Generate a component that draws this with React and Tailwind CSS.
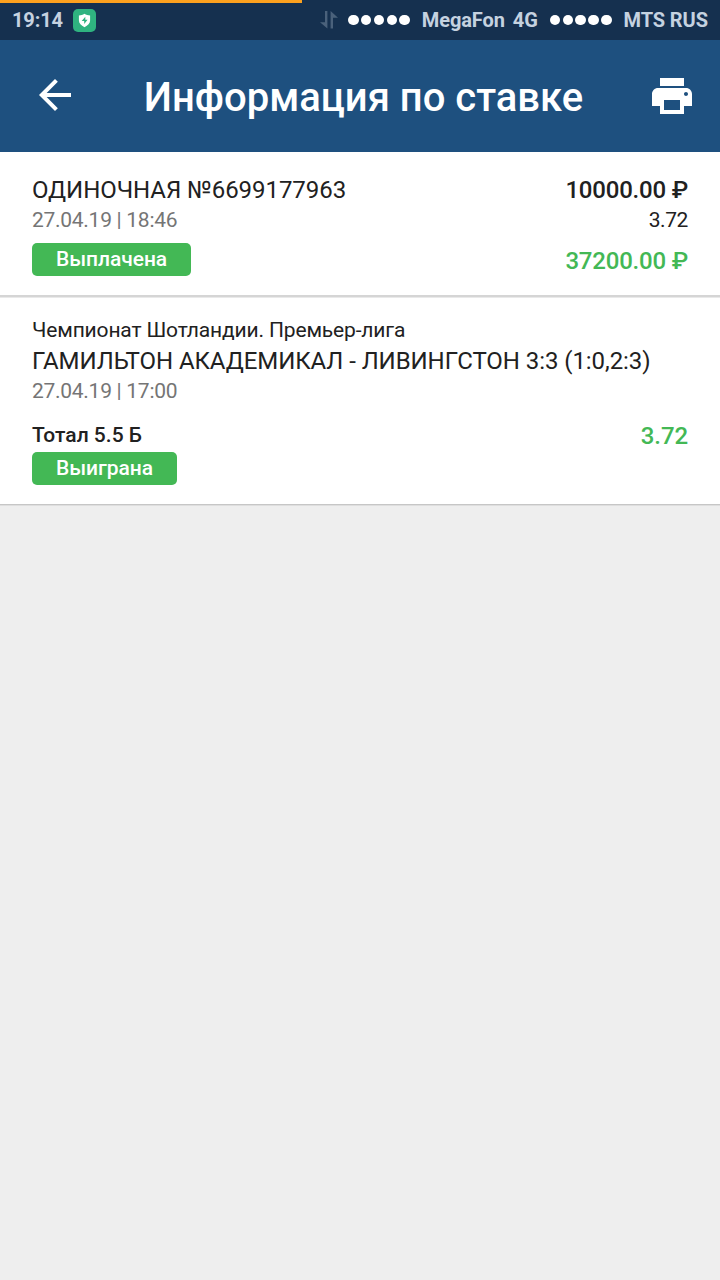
import clsx from "clsx";
import { MdArrowBack, MdPrint } from "react-icons/md";

const bet = {
  title: "ОДИНОЧНАЯ №6699177963",
  date: "27.04.19 | 18:46",
  status: "Выплачена",
  amount: "10000.00 ₽",
  rate: "3.72",
  payout: "37200.00 ₽",
};

const event = {
  league: "Чемпионат Шотландии. Премьер-лига",
  match: "ГАМИЛЬТОН АКАДЕМИКАЛ - ЛИВИНГСТОН 3:3 (1:0,2:3)",
  date: "27.04.19 | 17:00",
  outcome: "Тотал 5.5 Б",
  status: "Выиграна",
  rate: "3.72",
};

function SignalDots({ className }) {
  return (
    <div className={clsx("flex gap-[2.3px]", className)}>
      {[1, 2, 3, 4, 5].map((item) => (
        <div key={item} className="w-[10.5px] h-[10.5px] rounded-full bg-white" />
      ))}
    </div>
  );
}

function StatusBar() {
  return (
    <div className="relative flex items-center h-10 pl-3 pr-3 bg-[#15304f] text-[#c5d2e0] text-xl font-bold whitespace-nowrap">
      <div className="absolute top-0 left-0 h-[3px] w-[302px] bg-[#fca11f]" />
      <div className="w-[51px] tracking-[-0.15px]">19:14</div>
      <svg className="w-[23px] h-[23px] ml-[10px]" viewBox="0 0 23 23">
        <rect width="23" height="23" rx="5" fill="#2fb380" />
        <path
          d="M11.5 4.7c1.7 1 3.500 1.500 5.600 1.700v5.200c0 3-2.200 5-5.600 6.700-3.400-1.700-5.600-3.700-5.600-6.700V6.400c2.100-.2 3.900-.7 5.600-1.700z"
          fill="#fff"
        />
        <path d="M12.300 7.800 8.700 12.100h2.500v3l3.400-4.300h-2.300z" fill="#2fb380" />
      </svg>
      <div className="flex items-center ml-auto">
        <svg className="w-[18px] h-[18px]" viewBox="0 0 18 18" fill="#4a617b">
          <path d="M5 0h2.400v17.500L0 11.200h5z" />
          <path d="M10.600 0 18 6.800h-5V17.500h-2.400z" />
        </svg>
        <SignalDots className="ml-[10px]" />
        <div className="ml-3 w-[83px] tracking-[-0.1px]">MegaFon</div>
        <div className="ml-2 w-[25px] tracking-[-0.1px]">4G</div>
        <SignalDots className="ml-3" />
        <div className="ml-3 w-[84.5px] tracking-[-0.1px]">MTS RUS</div>
      </div>
    </div>
  );
}

function Header() {
  return (
    <div className="flex items-center justify-between h-28 pl-[31px] pr-6 text-white bg-[#1e507f]">
      <button type="button" aria-label="Назад" className="-mt-[2px]">
        <MdArrowBack className="w-12 h-12" />
      </button>
      <div className="text-[40px] leading-[48px] font-medium mt-1">
        Информация по ставке
      </div>
      <button type="button" aria-label="Печать">
        <MdPrint className="w-12 h-12" />
      </button>
    </div>
  );
}

function Badge({ children }) {
  return (
    <div className="h-[32.5px] px-6 text-white rounded-[5px] bg-[#43b855] text-[21px] leading-8 tracking-[-0.05px] font-medium w-fit">
      {children}
    </div>
  );
}

function App() {
  return (
    <div className="min-h-screen bg-[#eeeeee] text-[#212121] font-['Roboto',sans-serif]">
      <StatusBar />
      <Header />
      <div className="relative flex justify-between h-[145px] px-8 pt-6 bg-white border-b-2 border-[#d5d5d5] shadow-[0_1px_0_#e9e9e9]">
        <div>
          <div className="text-2xl leading-7 tracking-[-0.05px]">
            {bet.title}
          </div>
          <div className="text-[21px] leading-8 tracking-[-0.28px] text-[#757575]">
            {bet.date}
          </div>
          <div className="mt-[7px]">
            <Badge>{bet.status}</Badge>
          </div>
        </div>
        <div className="text-right">
          <div className="text-2xl leading-7 tracking-[-0.2px] font-medium">
            {bet.amount}
          </div>
          <div className="text-[21px] leading-8 tracking-[-0.4px]">
            {bet.rate}
          </div>
          <div className="mt-[11px] text-2xl leading-7 tracking-[-0.2px] font-medium text-[#43b855]">
            {bet.payout}
          </div>
        </div>
      </div>
      <div className="h-[208px] px-8 pt-5 bg-white border-b border-[#c6c6c6] shadow-[0_1px_0_#dedede]">
        <div className="text-[21px] leading-[26px] tracking-[-0.15px]">
          {event.league}
        </div>
        <div className="text-2xl leading-9 tracking-[-0.06px]">
          {event.match}
        </div>
        <div className="-mt-px text-[21px] leading-[26px] tracking-[-0.28px] text-[#757575]">
          {event.date}
        </div>
        <div className="flex justify-between mt-[17px]">
          <div>
            <div className="text-[21px] leading-7 font-medium">
              {event.outcome}
            </div>
            <div className="mt-[3px]">
              <Badge>{event.status}</Badge>
            </div>
          </div>
          <div className="mt-px text-2xl leading-7 tracking-[-0.1px] font-medium text-[#43b855]">
            {event.rate}
          </div>
        </div>
      </div>
    </div>
  );
}

export default App;
